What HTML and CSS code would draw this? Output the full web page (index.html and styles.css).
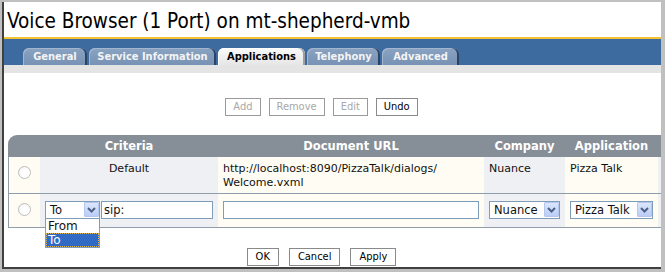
FILE: index.html
```html
<!DOCTYPE html>
<html>
<head>
<meta charset="utf-8">
<title>Voice Browser</title>
<link rel="stylesheet" href="styles.css">
</head>
<body>
<div class="window">
  <div class="page">
    <h1 class="title">Voice Browser (1 Port) on mt-shepherd-vmb</h1>
    <div class="tabbar">
      <div class="tab tab-general">General</div>
      <div class="tab tab-service">Service Information</div>
      <div class="tab tab-apps tab-active">Applications</div>
      <div class="tab tab-tele">Telephony</div>
      <div class="tab tab-adv">Advanced</div>
    </div>
    <div class="tabfoot"></div>

    <div class="toolbar">
      <button class="btn" disabled>Add</button>
      <button class="btn" disabled>Remove</button>
      <button class="btn" disabled>Edit</button>
      <button class="btn">Undo</button>
    </div>

    <table class="grid">
      <colgroup>
        <col class="c-radio"><col class="c-crit"><col class="c-url"><col class="c-comp"><col class="c-app"><col class="c-end">
      </colgroup>
      <thead>
        <tr>
          <th class="th-first"></th>
          <th>Criteria</th>
          <th>Document URL</th>
          <th>Company</th>
          <th>Application</th>
          <th></th>
        </tr>
      </thead>
      <tbody>
        <tr class="row">
          <td class="cell-radio"><span class="radio"></span></td>
          <td class="cell-crit center">Default</td>
          <td class="cell-url">http://localhost:8090/PizzaTalk/dialogs/<wbr>Welcome.vxml</td>
          <td class="cell-comp">Nuance</td>
          <td class="cell-app">Pizza Talk</td>
          <td class="cell-end"></td>
        </tr>
        <tr class="row row-edit">
          <td class="cell-radio"><span class="radio"></span></td>
          <td class="cell-crit">
            <div class="crit-fields">
              <div class="select select-crit">
                <span class="select-value">To</span>
                <span class="select-arrow"><svg width="15" height="15" viewBox="0 0 15 15"><path d="M4 6 L7.5 9.5 L11 6" fill="none" stroke="#4d6185" stroke-width="2"/></svg></span>
                <div class="listbox">
                  <div class="option">From</div>
                  <div class="option option-selected">To</div>
                </div>
              </div>
              <input class="textbox textbox-sip" type="text" value="sip:">
            </div>
          </td>
          <td class="cell-url"><input class="textbox textbox-full" type="text" value=""></td>
          <td class="cell-comp">
            <div class="select select-full">
              <span class="select-value">Nuance</span>
              <span class="select-arrow"><svg width="15" height="15" viewBox="0 0 15 15"><path d="M4 6 L7.5 9.5 L11 6" fill="none" stroke="#4d6185" stroke-width="2"/></svg></span>
            </div>
          </td>
          <td class="cell-app">
            <div class="select select-full">
              <span class="select-value">Pizza Talk</span>
              <span class="select-arrow"><svg width="15" height="15" viewBox="0 0 15 15"><path d="M4 6 L7.5 9.5 L11 6" fill="none" stroke="#4d6185" stroke-width="2"/></svg></span>
            </div>
          </td>
          <td class="cell-end"></td>
        </tr>
      </tbody>
    </table>

    <div class="actions">
      <button class="btn">OK</button>
      <button class="btn">Cancel</button>
      <button class="btn">Apply</button>
    </div>
  </div>
</div>
</body>
</html>
```
FILE: styles.css
```css
html, body {
  margin: 0;
  padding: 0;
  background: #fff;
}

.window {
  width: 665px;
  height: 272px;
  box-sizing: border-box;
  border-style: solid;
  border-color: #c0c0c0;
  border-width: 2px 4px 3px 2px;
  background: #fff;
}

.page {
  height: 100%;
  box-sizing: border-box;
  border-left: 2px solid #404040;
  border-bottom: 2px solid #404040;
  font-family: "DejaVu Sans", Verdana, sans-serif;
  font-size: 11px;
  color: #111;
}

.title {
  margin: 0;
  height: 37px;
  box-sizing: border-box;
  padding: 3px 0 0 3px;
  line-height: 32px;
  font-family: "DejaVu Sans Condensed", "DejaVu Sans", sans-serif;
  font-weight: normal;
  font-size: 20.5px;
  color: #000;
  border-bottom: 2px solid #f2c233;
}

.tabbar {
  height: 26px;
  box-sizing: border-box;
  padding: 9px 0 0 19px;
  background: #3d6b9f;
  display: flex;
  align-items: flex-end;
  gap: 2px;
}

.tab {
  height: 17px;
  line-height: 17px;
  text-align: center;
  font-family: "DejaVu Sans Condensed", "DejaVu Sans", sans-serif;
  font-weight: bold;
  font-size: 11px;
  color: #f4f4f4;
  background: linear-gradient(#8aa3c2, #7892b5);
  border-radius: 6px 6px 0 0;
  box-shadow: inset -2px 0 0 #2b4465, inset 1px 1px 0 #a3b6cf;
}

.tab-general { width: 64px; }
.tab-service { width: 127px; }
.tab-apps { width: 87px; }
.tab-tele { width: 73px; }
.tab-adv { width: 77px; }

.tab-active {
  color: #000;
  background: linear-gradient(#fafafa, #e6e6e6);
  box-shadow: inset -2px 0 0 #a0a0a0, inset 1px 1px 0 #ffffff;
}

.tabfoot {
  height: 8px;
  background: #e4e4e4;
}

.toolbar,
.actions {
  display: flex;
  justify-content: center;
  padding-right: 22px;
}

.toolbar {
  gap: 8px;
  margin-top: 25px;
}

.actions {
  gap: 10px;
  margin-top: 20px;
}

.btn {
  height: 18px;
  margin: 0;
  padding: 0 7px;
  border: 1px solid #8a8a8a;
  border-radius: 0;
  background: #fff;
  font-family: "DejaVu Sans Condensed", "DejaVu Sans", sans-serif;
  font-size: 11px;
  line-height: 16px;
  color: #000;
}

.actions .btn {
  padding: 0 8px;
}

.btn:disabled {
  color: #a8a8a8;
  border-color: #9a9a9a;
}

.grid {
  margin: 19px 0 0 4px;
  width: 653px;
  table-layout: fixed;
  border-collapse: separate;
  border-spacing: 0;
}

.c-radio { width: 32px; }
.c-crit { width: 178px; }
.c-url { width: 266px; }
.c-comp { width: 81px; }
.c-app { width: 93px; }
.c-end { width: 3px; }

.grid th {
  height: 22px;
  padding: 0;
  background: #868e97;
  color: #fff;
  font-weight: bold;
  font-size: 11.5px;
  line-height: 22px;
  text-align: center;
  white-space: nowrap;
}

.grid th.th-first {
  border-top-left-radius: 9px;
}

.grid td {
  padding: 5px 5px 3px;
  vertical-align: top;
  line-height: 14px;
  border-bottom: 1px solid #8f9caa;
  background: #fffdf3;
}

.grid td.cell-crit,
.grid td.cell-comp,
.grid td.cell-end {
  background: #eff0f3;
}

.grid td.cell-end {
  padding: 0;
}

.grid td.cell-radio {
  border-left: 1px solid #8f9caa;
  padding: 9px 0 0;
  text-align: center;
}

.row-edit td {
  padding: 7px 5px 8px;
}

.center {
  text-align: center;
}

.radio {
  display: inline-block;
  width: 13px;
  height: 13px;
  box-sizing: border-box;
  border-radius: 50%;
  border: 1px solid #bdbdbd;
  background: radial-gradient(circle at 60% 60%, #ffffff 40%, #ececec 100%);
  vertical-align: top;
}

.crit-fields {
  display: flex;
  gap: 1px;
}

.select {
  position: relative;
  display: flex;
  align-items: flex-start;
  height: 18px;
  box-sizing: border-box;
  border: 1px solid #7f9db9;
  background: #fff;
  color: #111;
}

.select-crit {
  width: 55px;
  flex: none;
}

.select-full {
  width: 100%;
}

.select-value {
  flex: 1;
  padding-left: 4px;
  line-height: 16px;
  font-size: 11.5px;
  white-space: nowrap;
  overflow: hidden;
}

.select-arrow {
  width: 15px;
  height: 15px;
  flex: none;
  box-sizing: border-box;
  border: 1px solid #b4c6ee;
  border-radius: 1px;
  background: linear-gradient(#dbe6fd, #b9cdf7);
}

.select-arrow svg {
  display: block;
  margin: -1px;
}

.listbox {
  position: absolute;
  top: 16px;
  left: -1px;
  width: 55px;
  box-sizing: border-box;
  border: 1px solid #7f9db9;
  background: #fff;
  z-index: 2;
}

.option {
  height: 14px;
  line-height: 14px;
  padding-left: 2px;
  font-size: 12px;
  color: #111;
}

.option-selected {
  background: #316ac5;
  color: #fff;
  outline: 1px dotted #e2b45a;
  outline-offset: -1px;
}

.textbox {
  display: block;
  height: 18px;
  margin: 0;
  box-sizing: border-box;
  padding: 0 2px;
  border: 1px solid #7f9db9;
  font-family: "DejaVu Sans", Verdana, sans-serif;
  font-size: 11.5px;
  color: #111;
  background: #fff;
  outline: none;
}

.textbox-sip {
  width: 112px;
  flex: none;
}

.textbox-full {
  width: 100%;
}
```
